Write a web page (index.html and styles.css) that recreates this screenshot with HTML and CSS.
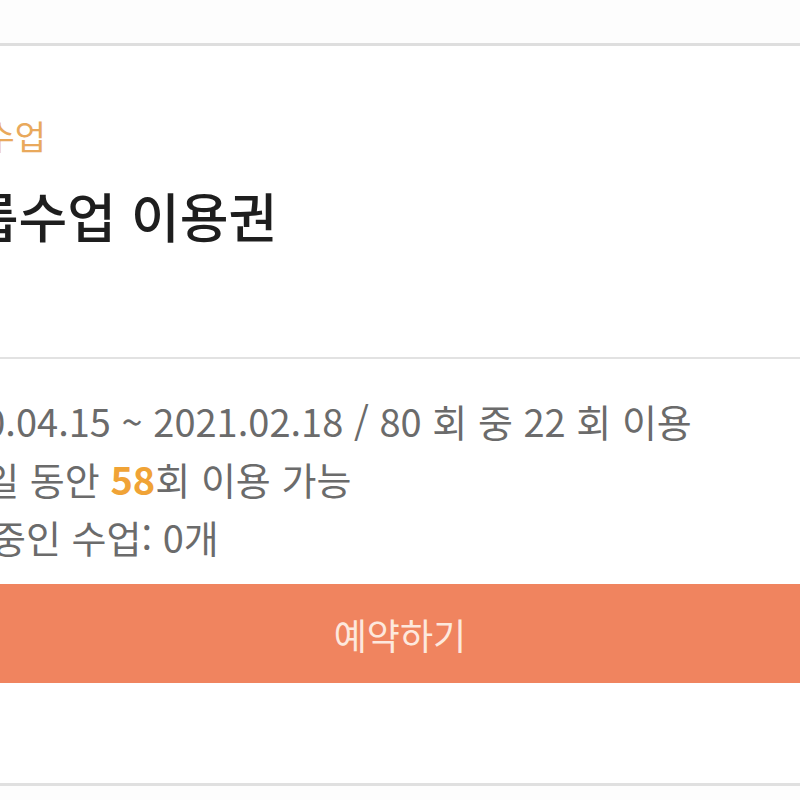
FILE: index.html
```html
<!DOCTYPE html>
<html lang="ko">
<head>
    <meta charset="UTF-8">
    <meta name="viewport" content="width=device-width, initial-scale=1.0">
    <title>그룹수업 이용권</title>
    <link rel="stylesheet" href="styles.css">
</head>
<body>
    <div class="ticket">
        <div class="ticket-head">
            <div class="category">그룹수업</div>
            <h1 class="title">그룹수업 이용권</h1>
        </div>

        <div class="ticket-body">
            <p class="info-line">2020.04.15 ~ 2021.02.18 / 80 회 중 22 회 이용</p>
            <p class="info-line">290일 동안 <strong class="count">58</strong>회 이용 가능</p>
            <p class="info-line">예약중인 수업: 0개</p>
        </div>

        <button class="reserve-button">예약하기</button>
    </div>
</body>
</html>
```

FILE: styles.css
```css
body {
    margin: 0;
    background-color: #fdfdfd;
    font-family: "Noto Sans CJK KR", "Noto Sans", sans-serif;
    overflow: hidden;
}
.ticket {
    margin-top: 43px;
    border-top: 3px solid #dedede;
    border-bottom: 3px solid #e0e0e0;
    padding-bottom: 100px;
    background-color: #ffffff;
}
/* the card is wider than the window; its left edge is cut off */
.ticket-head {
    padding: 70px 0 112px;
    margin-left: -79px;
    border-bottom: 2px solid #e2e2e2;
}
.category {
    font-size: 34px;
    line-height: 40px;
    color: #e9a95c;
}
.title {
    margin: 29px 0 0;
    font-size: 53px;
    line-height: 60px;
    font-weight: 500;
    color: #1e1e1e;
}
.ticket-body {
    padding: 33px 0 18px;
    margin-left: -79px;
}
.info-line {
    margin: 0;
    font-size: 38px;
    line-height: 58px;
    color: #6b6b6b;
}
.count {
    color: #f0a336;
    font-weight: 700;
}
.reserve-button {
    display: block;
    width: 100%;
    height: 99px;
    border: none;
    background-color: #f0845f;
    color: #fde8dd;
    font-family: inherit;
    font-size: 36px;
    cursor: pointer;
}
```
